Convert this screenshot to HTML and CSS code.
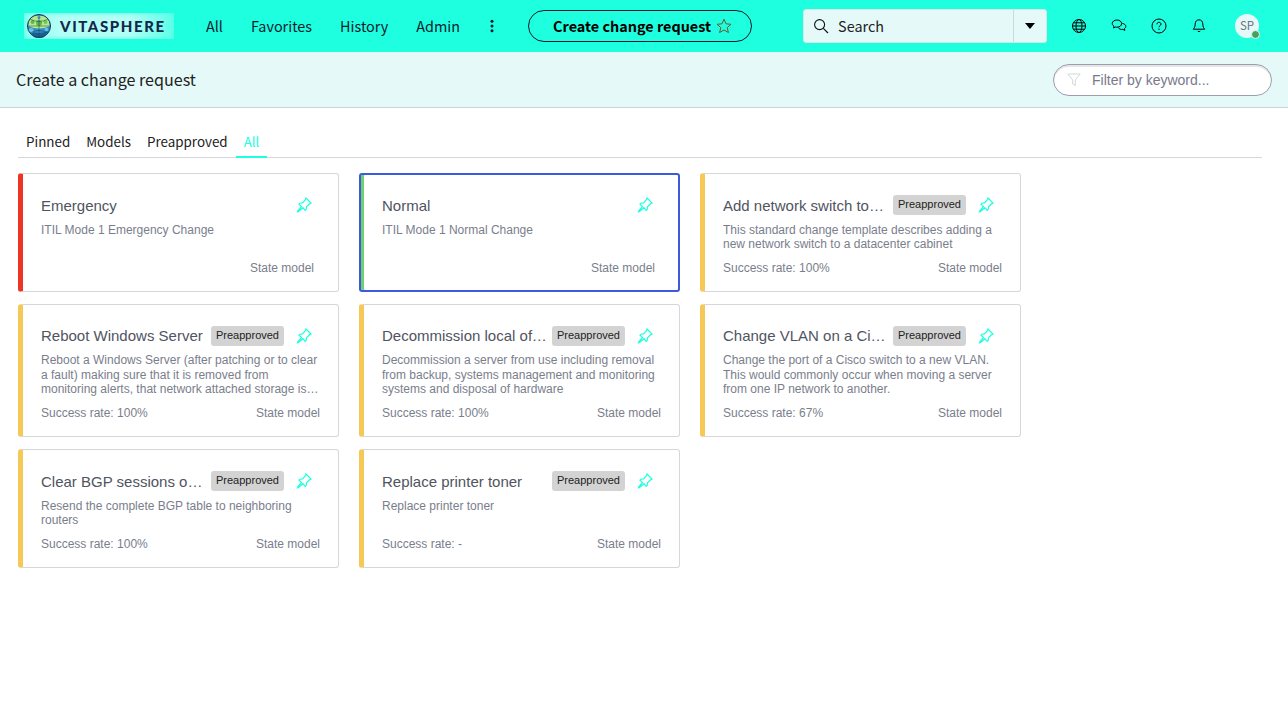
FILE: index.html
```html
<!DOCTYPE html>
<html lang="en">
<head>
    <meta charset="UTF-8">
    <meta name="viewport" content="width=device-width, initial-scale=1.0">
    <title>Create a change request</title>
    <link rel="stylesheet" href="styles.css">
</head>
<body>
    <svg class="defs" width="0" height="0">
        <symbol id="pin" viewBox="0 0 16 16">
            <path d="M10 1l5 5-1.200.6-3.300 3.200-.3 2.700-1 .8-2.300-2.600L2.500 14.500l-1 .3.300-1 3.700-4.300L3 7.200l.8-1 2.700-.3 3.100-3.400z" fill="none" stroke="#1effe0" stroke-width="1.200"/>
        </symbol>
    </svg>

    <header class="topbar">
        <div class="logo">
            <svg class="logo-globe" viewBox="0 0 30 26" width="30" height="26">
                <circle cx="15" cy="13" r="11.500" fill="#2f8fc4"/>
                <path d="M6 5 Q15 0 24 5 L26 13 Q15 18 4 13 Z" fill="#b9e88a"/>
                <path d="M6 18 Q15 22 24 18 L20 24 Q15 26 10 24 Z" fill="#17608f"/>
                <circle cx="15" cy="10" r="3" fill="#5dbb4b"/>
                <circle cx="8.500" cy="9" r="2" fill="#5dbb4b"/>
                <circle cx="21.500" cy="9" r="2" fill="#6cc85a"/>
                <circle cx="15" cy="4.500" r="1.600" fill="#4aa9dc"/>
                <circle cx="7" cy="17.500" r="2.500" fill="#67c1ea"/>
                <circle cx="22.500" cy="16.500" r="1.800" fill="#67c1ea"/>
                <circle cx="15" cy="13" r="11.500" fill="none" stroke="#1a3a5c" stroke-width="1"/>
                <path d="M3 13 H27 M15 1.500 V24.500 M6 6 Q15 11 24 6 M6 20 Q15 15 24 20" fill="none" stroke="#173a58" stroke-width=".5"/>
            </svg>
            <span class="logo-text">VITASPHERE</span>
        </div>
        <nav class="main-nav">
            <a>All</a>
            <a>Favorites</a>
            <a>History</a>
            <a>Admin</a>
        </nav>
        <svg class="kebab" viewBox="0 0 4 14" width="4" height="14"><circle cx="2" cy="2.2" r="1.5"/><circle cx="2" cy="7" r="1.5"/><circle cx="2" cy="11.8" r="1.5"/></svg>
        <button class="create-btn"><span>Create change request</span>
            <svg viewBox="0 0 16 16" width="16" height="16"><path d="M8 1.200l2 4.600 5 .5-3.800 3.300 1.200 4.900L8 12l-4.400 2.500 1.200-4.900L1 6.300l5-.5z" fill="none" stroke="#6b5a2c" stroke-width="1"/></svg>
        </button>
        <div class="search">
            <svg class="search-icon" viewBox="0 0 16 16" width="16" height="16"><circle cx="6.6" cy="6.6" r="5" fill="none" stroke="#111" stroke-width="1.1"/><path d="M10.3 10.3L15 15" stroke="#111" stroke-width="1.2"/></svg>
            <span class="search-label">Search</span>
            <span class="search-drop"><i class="caret"></i></span>
        </div>
        <div class="top-icons">
            <svg viewBox="0 0 16 16" width="16" height="16"><g fill="none" stroke="#000" stroke-width="1"><circle cx="8" cy="8" r="6.500"/><ellipse cx="8" cy="8" rx="3" ry="6.500"/><path d="M1.500 8h13M2.400 4.800h11.200M2.400 11.200h11.200"/></g></svg>
            <svg viewBox="0 0 16 16" width="16" height="16"><g fill="none" stroke="#000" stroke-width="1"><path d="M6 2c2.600 0 4.600 1.500 4.600 3.600S8.600 9.200 6 9.200c-.5 0-1 0-1.400-.2L2.600 10l.4-1.900C1.900 7.500 1.200 6.600 1.200 5.600 1.200 3.500 3.400 2 6 2z"/><path d="M11.300 5.400c2 .2 3.500 1.500 3.500 3 0 .9-.5 1.700-1.300 2.200l.3 1.800-1.900-1c-2 .3-4-.4-4.700-2"/></g></svg>
            <svg viewBox="0 0 16 16" width="16" height="16"><circle cx="8" cy="8" r="7" fill="none" stroke="#000" stroke-width="1"/><path d="M6 6.300C6 5 7 4.300 8 4.300s2 .7 2 1.800c0 1.500-2 1.600-2 3.100" fill="none" stroke="#000" stroke-width="1"/><circle cx="8" cy="11.300" r=".7"/></svg>
            <svg viewBox="0 0 16 16" width="16" height="16"><path d="M8 1.800c-2.500 0-3.800 1.900-3.800 4.200 0 3-1.100 4.200-2 5.200h11.600c-.9-1-2-2.200-2-5.200 0-2.300-1.300-4.200-3.800-4.200zM6.500 12.800c.3 1 2.700 1 3 0" fill="none" stroke="#000" stroke-width="1"/></svg>
        </div>
        <div class="avatar"><span>SP</span><i class="status"></i></div>
    </header>

    <div class="subbar">
        <h1>Create a change request</h1>
        <div class="filter">
            <svg viewBox="0 0 14 14" width="14" height="14"><path d="M.8 1h12.400L8.300 7v5.600L5.700 11V7z" fill="none" stroke="#d3d6da" stroke-width="1"/></svg>
            <span>Filter by keyword...</span>
        </div>
    </div>

    <main class="content">
        <div class="tabs">
            <a>Pinned</a>
            <a>Models</a>
            <a>Preapproved</a>
            <a class="active">All</a>
        </div>

        <div class="cards">
            <div class="card card-red">
                <div class="card-head"><span class="card-title">Emergency</span><svg class="pin"><use href="#pin"/></svg></div>
                <p class="card-desc">ITIL Mode 1 Emergency Change</p>
                <div class="card-foot card-foot-short"><span></span><span>State model</span></div>
            </div>
            <div class="card card-selected">
                <div class="card-head"><span class="card-title">Normal</span><svg class="pin"><use href="#pin"/></svg></div>
                <p class="card-desc">ITIL Mode 1 Normal Change</p>
                <div class="card-foot card-foot-short"><span></span><span>State model</span></div>
            </div>
            <div class="card">
                <div class="card-head"><span class="card-title">Add network switch to datacenter cabinet</span><span class="badge">Preapproved</span><svg class="pin"><use href="#pin"/></svg></div>
                <p class="card-desc">This standard change template describes adding a new network switch to a datacenter cabinet</p>
                <div class="card-foot"><span>Success rate: 100%</span><span>State model</span></div>
            </div>
            <div class="card">
                <div class="card-head"><span class="card-title">Reboot Windows Server</span><span class="badge">Preapproved</span><svg class="pin"><use href="#pin"/></svg></div>
                <p class="card-desc">Reboot a Windows Server (after patching or to clear a fault) making sure that it is removed from monitoring alerts, that network attached storage is safely disconnected and that services restart</p>
                <div class="card-foot"><span>Success rate: 100%</span><span>State model</span></div>
            </div>
            <div class="card">
                <div class="card-head"><span class="card-title">Decommission local office server</span><span class="badge">Preapproved</span><svg class="pin"><use href="#pin"/></svg></div>
                <p class="card-desc">Decommission a server from use including removal from backup, systems management and monitoring systems and disposal of hardware</p>
                <div class="card-foot"><span>Success rate: 100%</span><span>State model</span></div>
            </div>
            <div class="card">
                <div class="card-head"><span class="card-title">Change VLAN on a Cisco switch</span><span class="badge">Preapproved</span><svg class="pin"><use href="#pin"/></svg></div>
                <p class="card-desc">Change the port of a Cisco switch to a new VLAN. This would commonly occur when moving a server from one IP network to another.</p>
                <div class="card-foot"><span>Success rate: 67%</span><span>State model</span></div>
            </div>
            <div class="card">
                <div class="card-head"><span class="card-title">Clear BGP sessions on a router</span><span class="badge">Preapproved</span><svg class="pin"><use href="#pin"/></svg></div>
                <p class="card-desc">Resend the complete BGP table to neighboring routers</p>
                <div class="card-foot"><span>Success rate: 100%</span><span>State model</span></div>
            </div>
            <div class="card">
                <div class="card-head"><span class="card-title">Replace printer toner</span><span class="badge">Preapproved</span><svg class="pin"><use href="#pin"/></svg></div>
                <p class="card-desc">Replace printer toner</p>
                <div class="card-foot"><span>Success rate: -</span><span>State model</span></div>
            </div>
        </div>
    </main>
</body>
</html>
```

FILE: styles.css
```css
* {
    box-sizing: border-box;
}

body {
    margin: 0;
    background-color: #fff;
    font-family: "Liberation Sans", Arial, sans-serif;
    color: #4a4f5c;
}

.defs {
    display: block;
    height: 0;
}

.topbar {
    display: flex;
    align-items: center;
    height: 52px;
    padding-left: 24px;
    background-color: #1effe0;
    font-family: "Noto Sans CJK SC", "Noto Sans", sans-serif;
    color: #0c1c2e;
}

.logo {
    display: flex;
    align-items: center;
    width: 150px;
    height: 26px;
    background: linear-gradient(90deg, #8dfff0, #b4fff5 25%, #b4fff5 70%, #5cffe8);
    box-shadow: inset 0 0 5px #4dffe6;
}

.logo-text {
    margin-left: 6px;
    font-family: Lato, "Liberation Sans", sans-serif;
    font-size: 15px;
    font-weight: 900;
    letter-spacing: 1.6px;
    color: #14274a;
}

.main-nav {
    display: flex;
    gap: 28px;
    margin-left: 32px;
    padding-bottom: 2px;
    font-size: 14.400px;
}

.kebab {
    margin-left: 30px;
    fill: #0c1c2e;
}

.create-btn {
    display: flex;
    align-items: center;
    justify-content: center;
    gap: 5px;
    width: 224px;
    height: 32px;
    margin-left: 34px;
    padding: 0 0 0 5px;
    border: 1px solid #0c1c2e;
    border-radius: 16px;
    background: transparent;
    font-family: inherit;
    font-size: 14.400px;
    font-weight: 700;
    color: #000;
}

.create-btn span {
    padding-bottom: 2px;
}

.search {
    display: flex;
    align-items: center;
    width: 244px;
    height: 34px;
    margin-left: 51px;
    padding-left: 9px;
    border: 1px solid #d5e6e4;
    border-radius: 3px;
    background-color: #e5faf8;
    font-size: 14.400px;
    color: #222;
}

.search-label {
    flex: 1;
    margin-left: 9px;
    padding-bottom: 2px;
}

.search-drop {
    display: flex;
    align-items: center;
    justify-content: center;
    width: 33px;
    height: 100%;
    border-left: 1px solid #c9dcda;
}

.caret {
    border-left: 5.500px solid transparent;
    border-right: 5.500px solid transparent;
    border-top: 6px solid #000;
}

.top-icons {
    display: flex;
    gap: 24px;
    margin-left: 24px;
}

.avatar {
    position: relative;
    display: flex;
    align-items: center;
    justify-content: center;
    width: 24px;
    height: 24px;
    margin-left: 28px;
    border-radius: 50%;
    background-color: #e5faf8;
    font-size: 11.500px;
    color: #6d7280;
}

.avatar span {
    padding-bottom: 2px;
}

.status {
    position: absolute;
    right: -1px;
    bottom: -1px;
    width: 9px;
    height: 9px;
    border: 1.500px solid #e5faf8;
    border-radius: 50%;
    background-color: #4a9e5c;
}

.subbar {
    display: flex;
    align-items: center;
    justify-content: space-between;
    height: 56px;
    padding: 0 16px;
    border-bottom: 1px solid #c9d4d4;
    background-color: #e5faf8;
}

.subbar h1 {
    margin: 0;
    padding-bottom: 2px;
    font-family: "Noto Sans CJK SC", "Noto Sans", sans-serif;
    font-size: 16.100px;
    font-weight: 400;
    color: #222;
}

.filter {
    display: flex;
    align-items: center;
    gap: 11px;
    width: 219px;
    height: 32px;
    padding-left: 13px;
    border: 1px solid #9a9eb0;
    border-radius: 16px;
    background-color: #fff;
    box-shadow: inset 0 2px 0 #e6e6e6;
    font-size: 14px;
    color: #777b8a;
}

.content {
    padding: 22px 18px 0;
}

.tabs {
    display: flex;
    width: 1244px;
    height: 28px;
    border-bottom: 1px solid #d5d7dc;
    font-family: "Noto Sans CJK SC", "Noto Sans", sans-serif;
    font-size: 13.400px;
    color: #222;
}

.tabs a {
    height: 28px;
    padding: 0 8px;
    line-height: 22px;
}

.tabs .active {
    border-bottom: 2px solid #1effe0;
    color: #1effe0;
}

.cards {
    display: grid;
    grid-template-columns: repeat(3, 321px);
    gap: 12px 20px;
    margin-top: 15.100px;
}

.card {
    display: flex;
    flex-direction: column;
    padding: 21px 18px 16px;
    border: 1px solid #d5d7dc;
    border-left: 5px solid #f6c855;
    border-radius: 3px;
}

.card-red {
    border-left-color: #ee3524;
}

.card-selected {
    padding: 20px 17px 15px 21px;
    border: 2px solid #3a5bdc;
    box-shadow: inset 3px 0 0 #6fcf72;
}

.card-head {
    display: flex;
    align-items: center;
    height: 20px;
    padding-right: 8px;
}

.card-title {
    flex: 1;
    overflow: hidden;
    font-size: 15px;
    white-space: nowrap;
    text-overflow: ellipsis;
    color: #50545f;
}

.badge {
    flex-shrink: 0;
    width: 73px;
    height: 20px;
    margin-left: 5px;
    border-radius: 3px;
    background-color: #d3d3d3;
    font-size: 11px;
    line-height: 18px;
    text-align: center;
    color: #222;
}

.pin {
    flex-shrink: 0;
    width: 16px;
    height: 16px;
    margin-left: 12px;
}

.card-desc {
    display: -webkit-box;
    -webkit-box-orient: vertical;
    -webkit-line-clamp: 3;
    overflow: hidden;
    margin: 7.500px 0 9.500px;
    font-size: 12px;
    line-height: 14.400px;
    color: #7a7e8c;
}

.card-foot {
    display: flex;
    justify-content: space-between;
    margin-top: auto;
    font-size: 12px;
    line-height: 14px;
    color: #7a7e8c;
}

.card-foot-short {
    padding-right: 6px;
}
```
